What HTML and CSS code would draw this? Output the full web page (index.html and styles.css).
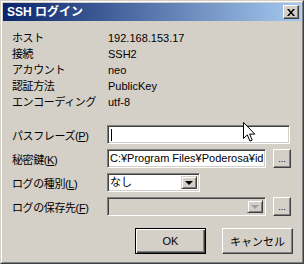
FILE: index.html
```html
<!DOCTYPE html>
<html lang="ja">
<head>
    <meta charset="UTF-8">
    <title>SSH ログイン</title>
    <link rel="stylesheet" href="styles.css">
</head>
<body>

<div class="window">
    <div class="frame">
        <div class="titlebar">
            <span class="title">SSH ログイン</span>
            <span class="close">
                <svg width="8" height="7" viewBox="0 0 8 7">
                    <path d="M0 0h2l2 2.5 2-2.5h2l-3 3.5 3 3.5h-2l-2-2.5-2 2.5h-2l3-3.5z" fill="#000"/>
                </svg>
            </span>
        </div>

        <div class="content">
            <!-- connection info -->
            <div class="info">
                <span class="key">ホスト</span><span>192.168.153.17</span>
                <span class="key">接続</span><span>SSH2</span>
                <span class="key">アカウント</span><span>neo</span>
                <span class="key">認証方法</span><span>PublicKey</span>
                <span class="key">エンコーディング</span><span>utf-8</span>
            </div>

            <!-- inputs -->
            <div class="row">
                <label class="label">パスフレーズ(<u>P</u>)</label>
                <div class="field wide"><span class="caret"></span></div>
            </div>
            <div class="row">
                <label class="label">秘密鍵(<u>K</u>)</label>
                <div class="field path">C:¥Program Files¥Poderosa¥id</div>
                <button class="btn small">...</button>
            </div>
            <div class="row">
                <label class="label">ログの種別(<u>L</u>)</label>
                <div class="field combo short">
                    <span class="combo-text">なし</span>
                    <span class="arrow"><i class="tri"></i></span>
                </div>
            </div>
            <div class="row">
                <label class="label">ログの保存先(<u>F</u>)</label>
                <div class="field combo path disabled">
                    <span class="combo-text"></span>
                    <span class="arrow"><i class="tri"></i></span>
                </div>
                <button class="btn small">...</button>
            </div>

            <div class="buttons">
                <button class="btn default">OK</button>
                <button class="btn">キャンセル</button>
            </div>
        </div>
    </div>

    <svg class="cursor" width="13" height="21" viewBox="0 0 13 21">
        <path d="M0.5 0.5v16l3.8-3.6 2.6 6.2 2.3-1-2.6-6h5.2z" fill="#fff" stroke="#000"/>
    </svg>
</div>

</body>
</html>
```

FILE: styles.css
```css
html, body {
    margin: 0;
    padding: 0;
}
body {
    width: 304px;
    height: 264px;
    overflow: hidden;
    font-family: "Liberation Sans", "Noto Sans CJK JP", sans-serif;
    font-size: 11px;
    color: #000;
    background-color: #d4d0c8;
}
.window {
    position: relative;
    width: 304px;
    height: 264px;
    box-sizing: border-box;
    border: 1px solid;
    border-color: #d4d0c8 #404040 #404040 #d4d0c8;
}
.frame {
    height: 100%;
    box-sizing: border-box;
    border: 1px solid;
    border-color: #fff #808080 #808080 #fff;
    padding: 1px;
}
.titlebar {
    height: 18px;
    display: flex;
    align-items: center;
    justify-content: space-between;
    padding: 0 2px 0 4px;
    background: linear-gradient(to right, #0a246a, #a6caf0);
}
.title {
    color: #fff;
    font-weight: bold;
    font-size: 12px;
    line-height: 18px;
}
.close {
    width: 16px;
    height: 14px;
    box-sizing: border-box;
    display: flex;
    align-items: center;
    justify-content: center;
    background-color: #d4d0c8;
    border: 1px solid;
    border-color: #fff #404040 #404040 #fff;
    box-shadow: inset -1px -1px #808080;
}
.content {
    padding: 9px 0 0 9px;
}
.info {
    display: grid;
    grid-template-columns: 96px 1fr;
    line-height: 16px;
}
.key, .label {
    letter-spacing: -0.4px;
}
.row {
    display: flex;
    align-items: center;
    height: 19px;
    margin-top: 5px;
}
.info + .row {
    margin-top: 15px;
}
.label {
    width: 95px;
    flex: none;
}
.field {
    height: 19px;
    box-sizing: border-box;
    background-color: #fff;
    border: 1px solid;
    border-color: #808080 #fff #fff #808080;
    box-shadow: inset 1px 1px #404040, inset -1px -1px #d4d0c8;
    line-height: 17px;
    padding-left: 2px;
    white-space: nowrap;
    overflow: hidden;
}
.wide {
    width: 183px;
}
.path {
    width: 159px;
}
.short {
    width: 93px;
}
.caret {
    display: inline-block;
    width: 1px;
    height: 12px;
    margin: 3px 0 0 1px;
    vertical-align: top;
    background-color: #000;
}
.combo {
    display: flex;
    padding: 2px;
}
.combo-text {
    flex: 1;
    line-height: 13px;
}
.arrow {
    width: 16px;
    height: 13px;
    box-sizing: border-box;
    display: flex;
    align-items: center;
    justify-content: center;
    background-color: #d4d0c8;
    border: 1px solid;
    border-color: #d4d0c8 #404040 #404040 #d4d0c8;
    box-shadow: inset 1px 1px #fff, inset -1px -1px #808080;
}
.tri {
    width: 0;
    height: 0;
    border-left: 4px solid transparent;
    border-right: 4px solid transparent;
    border-top: 4px solid #000;
}
.disabled {
    background-color: #d4d0c8;
}
.disabled .tri {
    border-top-color: #a0a0a0;
}
.btn {
    font-family: inherit;
    font-size: 11px;
    color: #000;
    background-color: #d4d0c8;
    border: 1px solid;
    border-color: #fff #404040 #404040 #fff;
    box-shadow: inset -1px -1px #808080;
    padding: 0;
    box-sizing: border-box;
}
.small {
    width: 18px;
    height: 19px;
    margin-left: 7px;
    font-size: 9px;
    line-height: 12px;
}
.buttons {
    display: flex;
    gap: 16px;
    margin: 12px 0 0 123px;
}
.buttons .btn {
    width: 71px;
    height: 26px;
}
.buttons .default {
    border: 1px solid #000;
    box-shadow: inset 1px 1px #fff, inset -1px -1px #404040, inset -2px -2px #808080;
}
.cursor {
    position: absolute;
    left: 242px;
    top: 121px;
}
```
